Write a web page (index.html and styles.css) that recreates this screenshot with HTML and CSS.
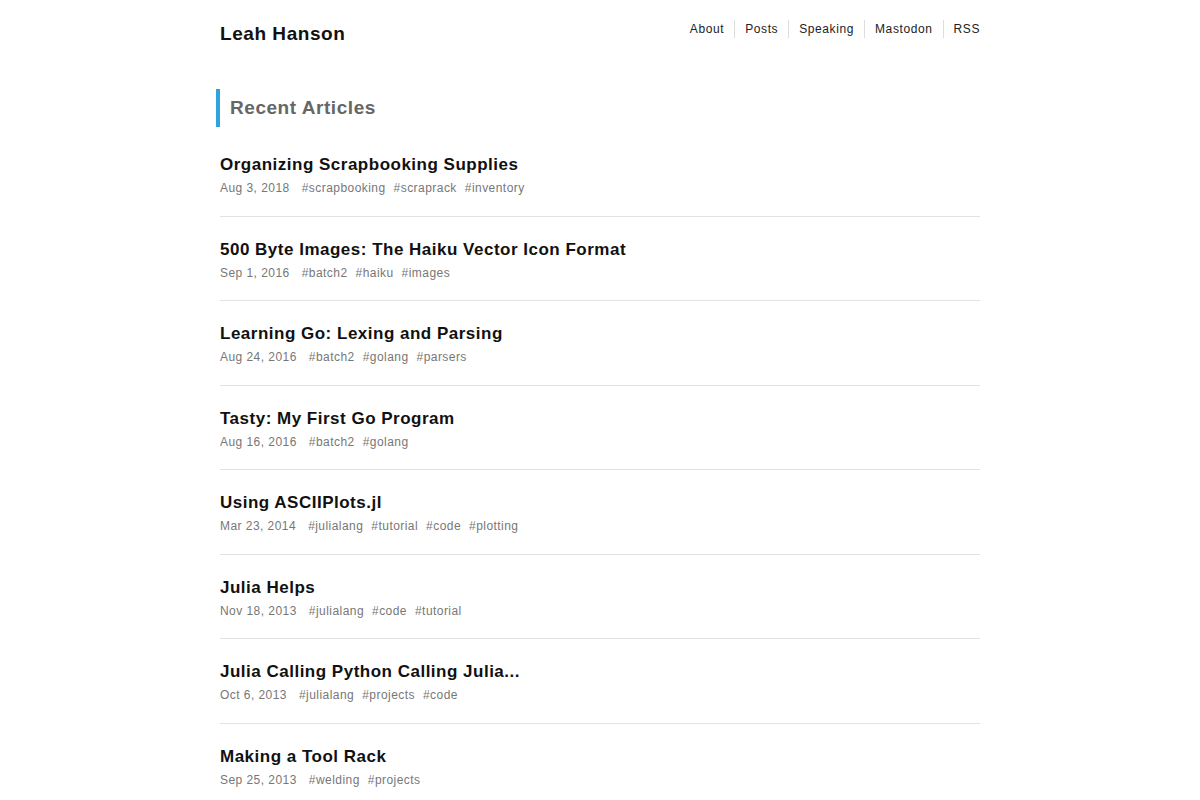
FILE: index.html
```html
<!DOCTYPE html>
<html>
<head>
<meta charset="utf-8">
<link rel="stylesheet" href="styles.css">
</head>
<body>
<div class="wrap">
  <header class="top">
    <a class="brand" href="#">Leah Hanson</a>
    <nav class="nav">
      <a href="#">About</a>
      <a href="#">Posts</a>
      <a href="#">Speaking</a>
      <a href="#">Mastodon</a>
      <a href="#">RSS</a>
    </nav>
  </header>
  <h2 class="section">Recent Articles</h2>
  <ul class="posts">
    <li class="post"><a class="title" href="#">Organizing Scrapbooking Supplies</a><div class="meta"><span class="date">Aug 3, 2018</span><span class="tag">#scrapbooking</span><span class="tag">#scraprack</span><span class="tag">#inventory</span></div></li>
    <li class="post"><a class="title" href="#">500 Byte Images: The Haiku Vector Icon Format</a><div class="meta"><span class="date">Sep 1, 2016</span><span class="tag">#batch2</span><span class="tag">#haiku</span><span class="tag">#images</span></div></li>
    <li class="post"><a class="title" href="#">Learning Go: Lexing and Parsing</a><div class="meta"><span class="date">Aug 24, 2016</span><span class="tag">#batch2</span><span class="tag">#golang</span><span class="tag">#parsers</span></div></li>
    <li class="post"><a class="title" href="#">Tasty: My First Go Program</a><div class="meta"><span class="date">Aug 16, 2016</span><span class="tag">#batch2</span><span class="tag">#golang</span></div></li>
    <li class="post"><a class="title" href="#">Using ASCIIPlots.jl</a><div class="meta"><span class="date">Mar 23, 2014</span><span class="tag">#julialang</span><span class="tag">#tutorial</span><span class="tag">#code</span><span class="tag">#plotting</span></div></li>
    <li class="post"><a class="title" href="#">Julia Helps</a><div class="meta"><span class="date">Nov 18, 2013</span><span class="tag">#julialang</span><span class="tag">#code</span><span class="tag">#tutorial</span></div></li>
    <li class="post"><a class="title" href="#">Julia Calling Python Calling Julia...</a><div class="meta"><span class="date">Oct 6, 2013</span><span class="tag">#julialang</span><span class="tag">#projects</span><span class="tag">#code</span></div></li>
    <li class="post"><a class="title" href="#">Making a Tool Rack</a><div class="meta"><span class="date">Sep 25, 2013</span><span class="tag">#welding</span><span class="tag">#projects</span></div></li>
  </ul>
</div>
</body>
</html>
```
FILE: styles.css
```css
* { box-sizing: border-box; }
html, body { margin: 0; padding: 0; background: #fff; }
body { font-family: "Liberation Sans", Arial, sans-serif; color: #111; }
a { text-decoration: none; color: inherit; }
.wrap { width: 760px; margin: 0 auto; }
.top { display: flex; justify-content: space-between; align-items: flex-start; padding-top: 22px; height: 89px; }
.brand { font-size: 19px; font-weight: bold; letter-spacing: 0.55px; color: #111; line-height: 24px; }
.nav { display: flex; margin-top: -2px; }
.nav a { font-size: 12px; letter-spacing: 0.6px; color: #222; padding: 0 10px; line-height: 18px; border-left: 1px solid #ddd; }
.nav a:first-child { border-left: none; }
.nav a:last-child { padding-right: 0; }
.section { margin: 0 0 5px -4px; border-left: 4px solid #2ea3dc; padding-left: 10px; font-size: 19px; font-weight: bold; letter-spacing: 0.55px; color: #666; line-height: 38px; }
.posts { list-style: none; margin: 0; padding: 0; }
.post { padding: 22px 0 18.5px; border-bottom: 1px solid #e2e2e2; }
.title { display: block; font-size: 17px; font-weight: bold; letter-spacing: 0.5px; color: #111; line-height: 22px; }
.meta { font-size: 12px; color: #777; letter-spacing: 0.45px; line-height: 18px; margin-top: 3px; }
.date { margin-right: 12px; }
.tag { margin-right: 8px; }
```
